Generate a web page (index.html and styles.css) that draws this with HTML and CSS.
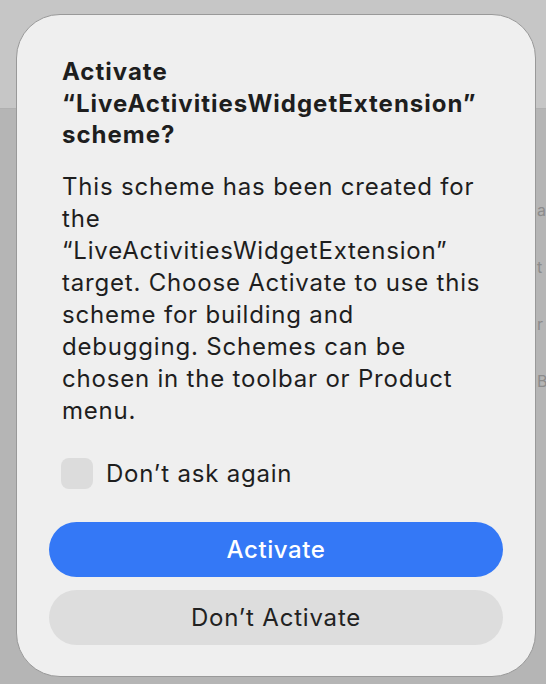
FILE: index.html
```html
<!DOCTYPE html>
<html lang="en">
<head>
<meta charset="utf-8">
<title>Activate scheme</title>
<link rel="stylesheet" href="styles.css">
</head>
<body>
<div class="backdrop" aria-hidden="true">
  <div class="bd-top"></div>
  <div class="bd-col">
    <span class="bd-text">a</span>
    <span class="bd-text">t</span>
    <span class="bd-text">r</span>
    <span class="bd-text">B</span>
  </div>
</div>
<div class="dialog" role="alertdialog">
  <h1 class="title">Activate<br>“LiveActivitiesWidgetExtension”<br>scheme?</h1>
  <p class="message">This scheme has been created for<br>the<br>“LiveActivitiesWidgetExtension”<br>target. Choose Activate to use this<br>scheme for building and<br>debugging. Schemes can be<br>chosen in the toolbar or Product<br>menu.</p>
  <label class="check-row">
    <span class="checkbox"></span>
    <span class="check-label">Don’t ask again</span>
  </label>
  <div class="buttons">
    <button class="btn btn-primary">Activate</button>
    <button class="btn btn-secondary">Don’t Activate</button>
  </div>
</div>
</body>
</html>
```
FILE: styles.css
```css
html, body {
  margin: 0;
  padding: 0;
}
body {
  width: 546px;
  height: 684px;
  overflow: hidden;
  background: #b5b5b5;
  font-family: Inter, "Noto Sans", "Liberation Sans", sans-serif;
  position: relative;
}
.backdrop {
  position: absolute;
  inset: 0;
}
.bd-top {
  height: 108px;
  background: #c6c6c6;
  border-bottom: 1px solid #b0b0b0;
}
.bd-col {
  position: absolute;
  left: 537px;
  top: 198px;
  display: flex;
  flex-direction: column;
  gap: 32px;
}
.bd-text {
  font-size: 16px;
  line-height: 25px;
  color: #8c8c8c;
}
.dialog {
  position: relative;
  margin: 14px 0 0 16px;
  width: 520px;
  height: 663px;
  box-sizing: border-box;
  background: #efefef;
  border: 1px solid #999999;
  border-radius: 44px;
  padding: 41px 32px 0 32px;
  display: flex;
  flex-direction: column;
  color: #1e1e1e;
}
.title {
  margin: 0 0 0 13px;
  font-size: 24px;
  font-weight: 700;
  line-height: 31.5px;
  letter-spacing: 1px;
}
.message {
  margin: 20px 0 0 13px;
  font-size: 24px;
  font-weight: 400;
  line-height: 32px;
  letter-spacing: 0.8px;
}
.check-row {
  margin: 31px 0 0 12px;
  display: flex;
  align-items: center;
  gap: 13px;
}
.checkbox {
  width: 32px;
  height: 31px;
  border-radius: 8px;
  background: #dcdcdc;
}
.check-label {
  font-size: 24px;
  line-height: 31px;
  letter-spacing: 0.8px;
}
.buttons {
  margin-top: 33px;
  display: flex;
  flex-direction: column;
  gap: 13px;
}
.btn {
  height: 55px;
  border: none;
  border-radius: 28px;
  font-family: inherit;
  font-size: 24px;
  padding: 0;
}
.btn-primary {
  background: #3478f6;
  color: #ffffff;
  font-weight: 500;
  letter-spacing: 0.6px;
}
.btn-secondary {
  background: #dddddd;
  color: #222222;
  font-weight: 400;
  letter-spacing: 0.8px;
}
```
